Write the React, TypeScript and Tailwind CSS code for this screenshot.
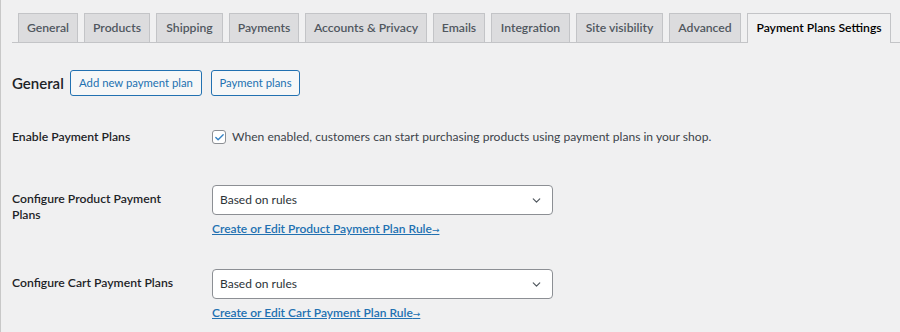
import { ChevronDown, Check } from 'lucide-react';

const tabs = [
  { label: 'General', w: 'w-[60px]' },
  { label: 'Products', w: 'w-[66px]' },
  { label: 'Shipping', w: 'w-[67px]' },
  { label: 'Payments', w: 'w-[70px]' },
  { label: 'Accounts & Privacy', w: 'w-[122px]' },
  { label: 'Emails', w: 'w-[52px]' },
  { label: 'Integration', w: 'w-[79px]' },
  { label: 'Site visibility', w: 'w-[87px]' },
  { label: 'Advanced', w: 'w-[72px]' },
];

function Select() {
  return (
    <div className="flex items-center justify-between w-[341px] h-[30px] bg-white border border-[#8c8f94] rounded-[4px] pl-[7px] pr-[9px] text-[12px] text-[#2c3338]">
      <span>Based on rules</span>
      <ChevronDown className="w-[13px] h-[13px] text-[#50575e]" strokeWidth={2.2} />
    </div>
  );
}

function RuleLink({ label }: { label: string }) {
  return (
    <a className="block mt-[6px] leading-[16px] text-[12px] font-semibold text-[#2271b1] underline">
      {label}
      <span className="font-['DejaVu_Sans',sans-serif] font-normal text-[9px]">→</span>
    </a>
  );
}

export default function App() {
  return (
    <div className="w-[900px] h-[332px] overflow-hidden bg-[#f0f0f1] border-l border-[#c8c8c8] font-['Lato',sans-serif] text-[#3c434a]">
      {/* Tabs */}
      <div className="ml-[11px] mt-[13px] flex items-end gap-[6px] border-b border-[#c3c4c7] pl-[6px]">
        {tabs.map((t) => (
          <div
            key={t.label}
            className={`${t.w} h-[29px] flex items-center justify-center bg-[#dcdcde] border border-b-0 border-[#c3c4c7] text-[12.2px] font-semibold text-[#50575e] whitespace-nowrap`}
          >
            {t.label}
          </div>
        ))}
        <div className="w-[144px] h-[30px] -mb-px flex items-center justify-center bg-[#f0f0f1] border border-b-0 border-[#c3c4c7] text-[12.2px] font-semibold text-black whitespace-nowrap">
          Payment Plans Settings
        </div>
      </div>

      <div className="pl-[11px]">
        {/* Heading */}
        <div className="mt-[27px] flex items-center h-[26px]">
          <h2 className="w-[58px] text-[15px] font-semibold text-[#1d2327]">General</h2>
          <button className="h-[26px] w-[132px] border border-[#2271b1] rounded-[3px] bg-[#f6f7f7] text-[11.3px] text-[#2271b1]">
            Add new payment plan
          </button>
          <button className="ml-[9px] h-[26px] w-[89px] border border-[#2271b1] rounded-[3px] bg-[#f6f7f7] text-[11.3px] text-[#2271b1]">
            Payment plans
          </button>
        </div>

        {/* Enable */}
        <div className="mt-[32px] flex items-center h-[18px]">
          <div className="w-[200px] text-[12.2px] font-semibold text-[#1d2327]">Enable Payment Plans</div>
          <div className="w-[14px] h-[14px] bg-white border border-[#8c8f94] rounded-[3px] flex items-center justify-center">
            <Check className="w-[11px] h-[11px] text-[#3582c4]" strokeWidth={3} />
          </div>
          <span className="ml-[6px] text-[12.1px]">
            When enabled, customers can start purchasing products using payment plans in your shop.
          </span>
        </div>

        {/* Product */}
        <div className="mt-[39px] flex">
          <div className="w-[200px] pt-[6px]">
            <div className="w-[170px] text-[12.2px] leading-[16px] font-semibold text-[#1d2327]">
              Configure Product Payment Plans
            </div>
          </div>
          <div>
            <Select />
            <RuleLink label="Create or Edit Product Payment Plan Rule" />
          </div>
        </div>

        {/* Cart */}
        <div className="mt-[31px] flex">
          <div className="w-[200px] pt-[6px]">
            <div className="w-[170px] text-[12.2px] leading-[16px] font-semibold text-[#1d2327]">
              Configure Cart Payment Plans
            </div>
          </div>
          <div>
            <Select />
            <RuleLink label="Create or Edit Cart Payment Plan Rule" />
          </div>
        </div>
      </div>
    </div>
  );
}
